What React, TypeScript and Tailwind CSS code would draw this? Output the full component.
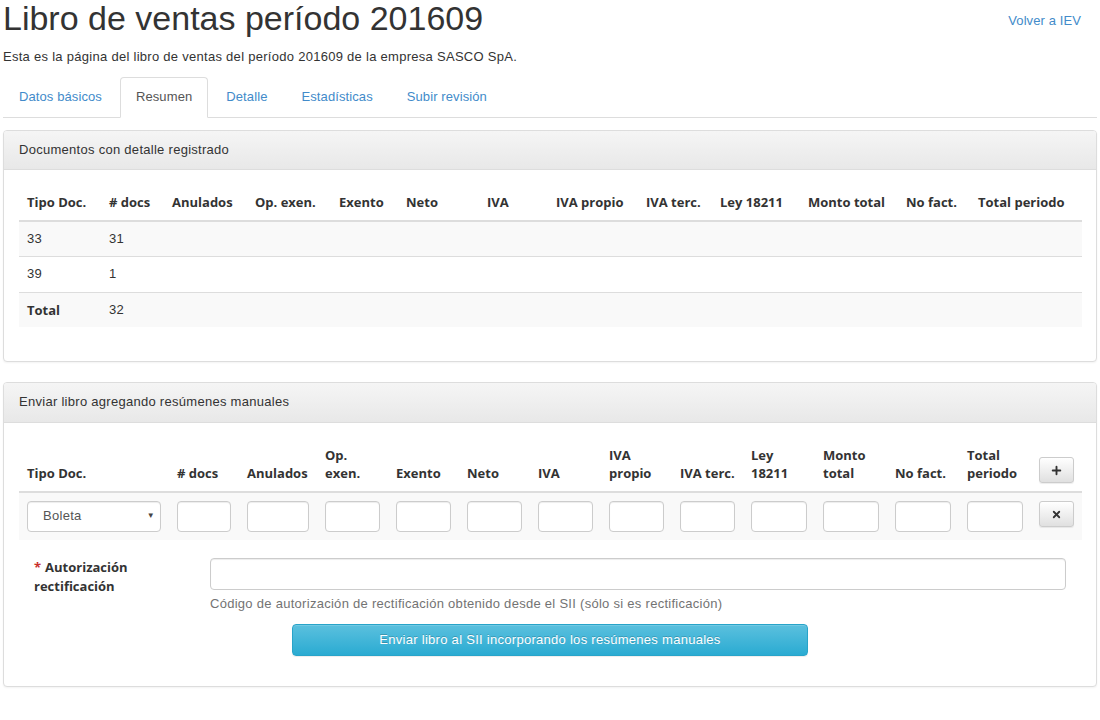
import React from 'react';
import { Plus, X } from 'lucide-react';

const boldFont = "font-['Open_Sans',sans-serif] font-bold tracking-normal";

const summaryCols = [
  'w-[82px]', 'w-[63px]', 'w-[83px]', 'w-[84px]', 'w-[67px]', 'w-[81px]', 'w-[69px]',
  'w-[90px]', 'w-[74px]', 'w-[88px]', 'w-[98px]', 'w-[72px]', 'w-[112px]',
];
const summaryHeaders = [
  'Tipo Doc.', '# docs', 'Anulados', 'Op. exen.', 'Exento', 'Neto', 'IVA',
  'IVA propio', 'IVA terc.', 'Ley 18211', 'Monto total', 'No fact.', 'Total periodo',
];
const summaryRows = [
  { tipo: '33', docs: '31' },
  { tipo: '39', docs: '1' },
  { tipo: 'Total', docs: '32', total: true },
];

const manualCols = [
  'w-[150px]', 'w-[70px]', 'w-[78px]', 'w-[71px]', 'w-[71px]', 'w-[71px]', 'w-[71px]',
  'w-[71px]', 'w-[71px]', 'w-[72px]', 'w-[72px]', 'w-[72px]', 'w-[72px]', 'w-[51px]',
];
const manualHeaders: React.ReactNode[] = [
  '# docs', 'Anulados', <>Op.<br />exen.</>, 'Exento', 'Neto', 'IVA',
  <>IVA<br />propio</>, 'IVA terc.', <>Ley<br />18211</>, <>Monto<br />total</>,
  'No fact.', <>Total<br />periodo</>,
];

const thClass = `${boldFont} border-b-2 border-[#ddd] p-2 text-left align-bottom leading-[1.42857] text-[#333] whitespace-nowrap`;
const tdClass = 'border-t border-[#ddd] p-2 leading-[1.42857] text-[#333]';
const inputClass = 'block h-[31px] w-full rounded-[4px] border border-[#ccc] bg-white shadow-[inset_0_1px_1px_rgba(0,0,0,0.075)]';
const smallBtn = 'flex h-[26px] w-[35px] items-center justify-center rounded-[3px] border border-[#ccc] bg-[linear-gradient(to_bottom,#fff_0,#e0e0e0_100%)] text-[#333] shadow-[inset_0_1px_0_rgba(255,255,255,0.15),0_1px_1px_rgba(0,0,0,0.075)]';

function Panel({ title, children }: { title: string; children: React.ReactNode }) {
  return (
    <div className="mb-5 rounded-[4px] border border-[#ddd] bg-white shadow-[0_1px_2px_rgba(0,0,0,0.05)]">
      <div className="rounded-t-[3px] border-b border-[#ddd] bg-[linear-gradient(to_bottom,#f5f5f5_0,#e8e8e8_100%)] px-[15px] py-[10px] leading-[1.42857] text-[#333]">
        {title}
      </div>
      <div className="p-[15px]">{children}</div>
    </div>
  );
}

export default function App() {
  const tabs = ['Datos básicos', 'Resumen', 'Detalle', 'Estadísticas', 'Subir revisión'];

  return (
    <div className="min-h-screen bg-white px-[3px] font-['Liberation_Sans',Arial,sans-serif] text-[13px] tracking-[0.28px] text-[#333]">
      {/* Header */}
      <div className="flex items-start justify-between">
        <h1 className="mb-[11px] text-[34px] font-normal leading-[1.1] tracking-normal text-[#333]">
          Libro de ventas período 201609
        </h1>
        <a className="mr-[16px] mt-[12px] leading-[1.42857] tracking-[0.1px] text-[#428bca]" href="#">
          Volver a IEV
        </a>
      </div>
      <p className="mb-[10px] leading-[1.42857]">
        Esta es la página del libro de ventas del período 201609 de la empresa SASCO SpA.
      </p>

      {/* Tabs */}
      <ul className="flex border-b border-[#ddd] tracking-[0.1px]">
        {tabs.map((t) => {
          const active = t === 'Resumen';
          return (
            <li key={t} className="-mb-px mr-[2px]">
              <a
                href="#"
                className={
                  active
                    ? 'block rounded-t-[4px] border border-[#ddd] border-b-white bg-white px-[15px] py-[10px] leading-[1.42857] text-[#555]'
                    : 'block rounded-t-[4px] border border-transparent px-[15px] py-[10px] leading-[1.42857] text-[#428bca]'
                }
              >
                {t}
              </a>
            </li>
          );
        })}
      </ul>

      <div className="mt-[12px]">
        {/* Resumen con detalle */}
        <Panel title="Documentos con detalle registrado">
          <table className="mb-[19px] w-full table-fixed border-collapse">
            <colgroup>
              {summaryCols.map((c, i) => (
                <col key={i} className={c} />
              ))}
            </colgroup>
            <thead>
              <tr>
                {summaryHeaders.map((h) => (
                  <th key={h} className={thClass}>
                    {h}
                  </th>
                ))}
              </tr>
            </thead>
            <tbody>
              {summaryRows.map((r, i) => (
                <tr key={r.tipo} className={i % 2 === 0 ? 'bg-[#f9f9f9]' : ''}>
                  <td className={r.total ? `${tdClass} ${boldFont}` : tdClass}>{r.tipo}</td>
                  <td className={tdClass}>{r.docs}</td>
                  {summaryHeaders.slice(2).map((h) => (
                    <td key={h} className={tdClass}></td>
                  ))}
                </tr>
              ))}
            </tbody>
          </table>
        </Panel>

        {/* Resúmenes manuales */}
        <Panel title="Enviar libro agregando resúmenes manuales">
          <table className="mb-[18px] w-full table-fixed border-collapse">
            <colgroup>
              {manualCols.map((c, i) => (
                <col key={i} className={c} />
              ))}
            </colgroup>
            <thead>
              <tr>
                <th className={thClass}>Tipo Doc.</th>
                {manualHeaders.map((h, i) => (
                  <th key={i} className={thClass}>
                    {h}
                  </th>
                ))}
                <th className={thClass}>
                  <button className={smallBtn}>
                    <Plus size={13} strokeWidth={3.5} />
                  </button>
                </th>
              </tr>
            </thead>
            <tbody>
              <tr className="bg-[#f9f9f9]">
                <td className={tdClass}>
                  <div className="relative">
                    <select className="block h-[31px] w-full appearance-none rounded-[4px] border border-[#ccc] bg-white pl-[15px] text-[13px] tracking-[0.28px] text-[#555] shadow-[inset_0_1px_1px_rgba(0,0,0,0.075)]">
                      <option>Boleta</option>
                    </select>
                    <span className="pointer-events-none absolute right-[6px] top-[9px] text-[8px] text-[#444]">▼</span>
                  </div>
                </td>
                {manualHeaders.map((_, i) => (
                  <td key={i} className={tdClass}>
                    <input className={inputClass} />
                  </td>
                ))}
                <td className={`${tdClass} align-top`}>
                  <button className={smallBtn}>
                    <X size={11} strokeWidth={4} />
                  </button>
                </td>
              </tr>
            </tbody>
          </table>

          <div className="flex">
            <div className="w-[176px] shrink-0 px-[15px]">
              <label className={`${boldFont} block leading-[19px] text-[#333] before:mr-[4px] before:text-[#c9302c] before:content-['*']`}>
                Autorización rectificación
              </label>
            </div>
            <div className="flex-1 px-[15px]">
              <input className="block h-[32px] w-full rounded-[4px] border border-[#ccc] bg-white shadow-[inset_0_1px_1px_rgba(0,0,0,0.075)]" />
              <p className="mb-[10px] mt-[5px] leading-[1.42857] text-[#737373]">
                Código de autorización de rectificación obtenido desde el SII (sólo si es rectificación)
              </p>
            </div>
          </div>
          <button className="mx-auto mb-[15px] block h-[32px] w-[516px] rounded-[4px] border border-[#28a4c9] bg-[linear-gradient(to_bottom,#5bc0de_0,#2aabd2_100%)] text-[13px] tracking-[0.28px] text-white shadow-[inset_0_1px_0_rgba(255,255,255,0.15),0_1px_1px_rgba(0,0,0,0.075)] [text-shadow:0_-1px_0_rgba(0,0,0,0.2)]">
            Enviar libro al SII incorporando los resúmenes manuales
          </button>
        </Panel>
      </div>
    </div>
  );
}
